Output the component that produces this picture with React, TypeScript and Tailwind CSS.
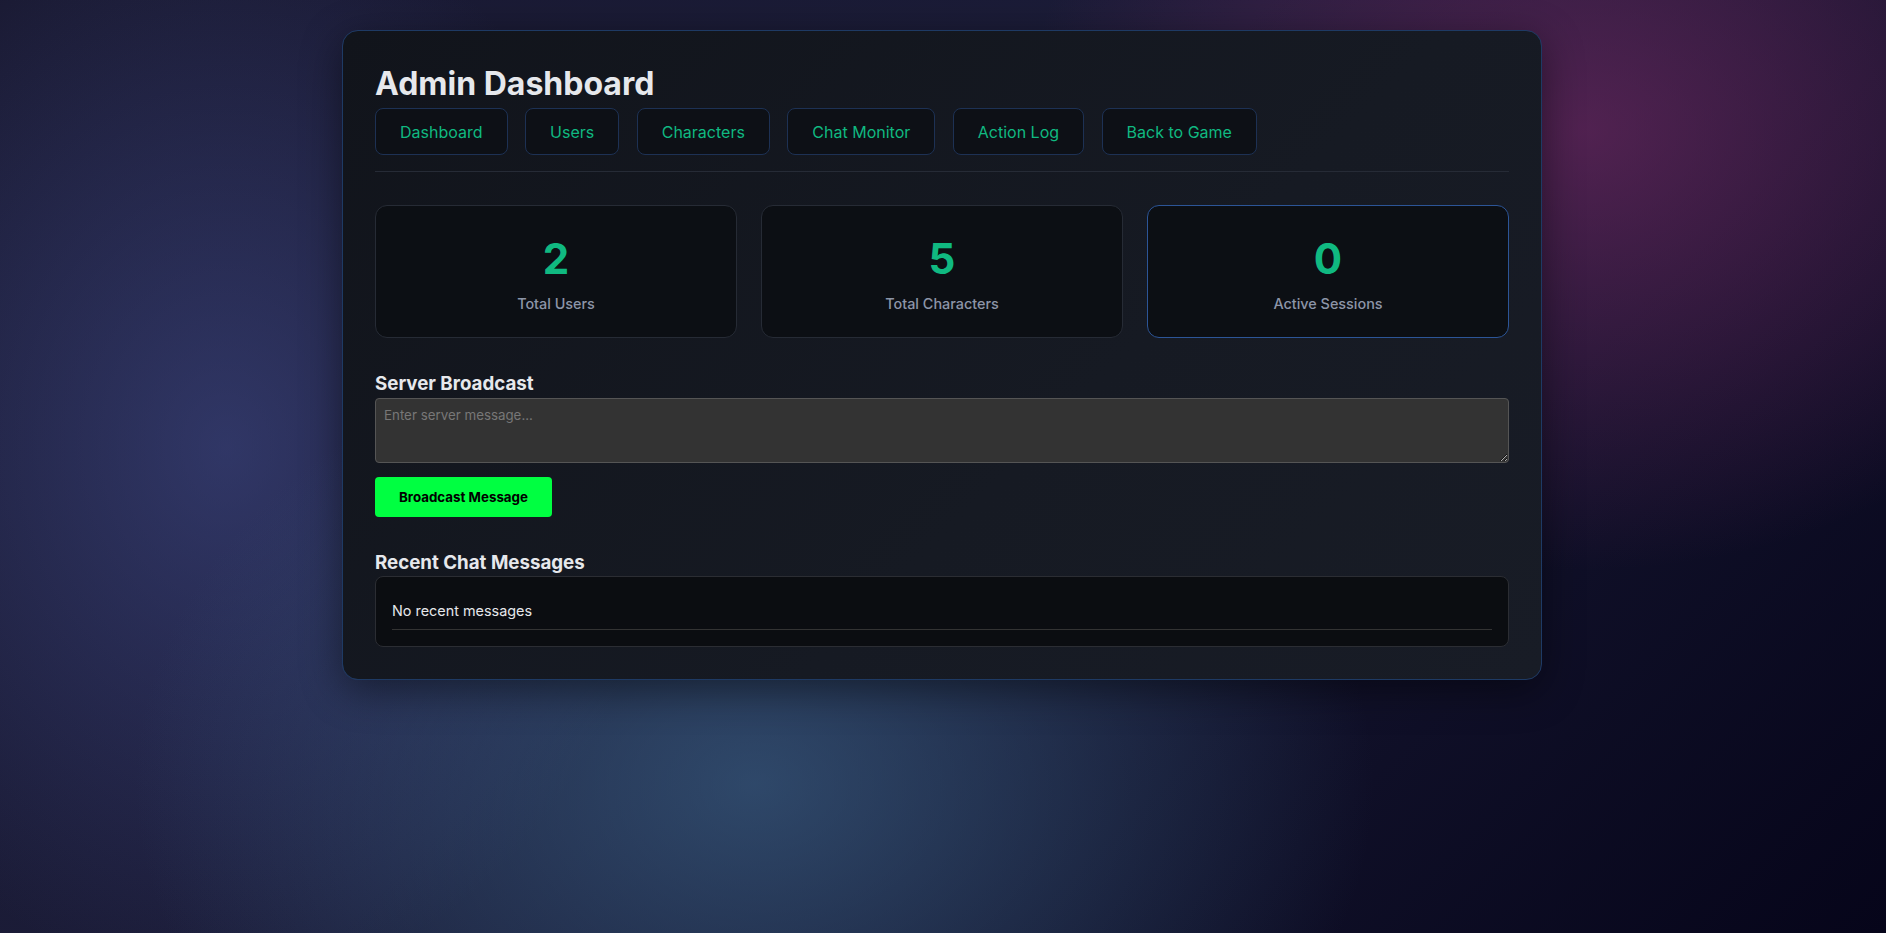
import { useState } from "react";

const tabs = ["Dashboard", "Users", "Characters", "Chat Monitor", "Action Log", "Back to Game"];

const stats = [
  { value: 2, label: "Total Users" },
  { value: 5, label: "Total Characters" },
  { value: 0, label: "Active Sessions", active: true },
];

export default function App() {
  const [message, setMessage] = useState("");
  const recent: string[] = [];

  return (
    <div className="min-h-screen w-full overflow-hidden bg-[#14142a] bg-[image:radial-gradient(ellipse_560px_440px_at_84%_14%,rgba(130,44,108,0.55),transparent),radial-gradient(ellipse_620px_460px_at_40%_84%,rgba(62,104,142,0.6),transparent),radial-gradient(ellipse_440px_540px_at_12%_48%,rgba(70,82,150,0.5),transparent),linear-gradient(135deg,#1a1a33_0%,#1b1c38_45%,#06051a_100%)] pt-[30px] font-['Inter',sans-serif]">
      <div className="relative -left-px mx-auto w-[1200px] rounded-[16px] border border-[#1e3a64] bg-[linear-gradient(135deg,#11141b_0%,#161a23_60%,#181c26_100%)] p-8 shadow-[0_10px_40px_rgba(0,0,0,0.45)]">
        <h1 className="mb-[3px] text-[32px] leading-[42px] font-bold text-[#e6e8ec]">Admin Dashboard</h1>

        {/* nav */}
        <div className="flex gap-[17.5px] border-b border-[#262b36] pb-4">
          {tabs.map((t) => (
            <button
              key={t}
              className="flex h-[47px] items-center rounded-lg border border-[#1d3154] bg-[#0d1016] px-6 text-[16px] font-normal text-[#10b981]"
            >
              {t}
            </button>
          ))}
        </div>

        {/* stats */}
        <div className="mt-[33px] grid grid-cols-3 gap-6">
          {stats.map((s) => (
            <div
              key={s.label}
              className={
                "flex h-[133px] flex-col items-center rounded-xl border bg-[#0c0f14] pt-[29px] " +
                (s.active ? "border-[#2c5597]" : "border-[#262b35]")
              }
            >
              <div className="text-[42px] leading-[48px] font-bold text-[#10b981]">{s.value}</div>
              <div className="mt-[11px] text-[14.4px] leading-5 font-medium text-[#8c95a8]">{s.label}</div>
            </div>
          ))}
        </div>

        {/* broadcast */}
        <h3 className="mt-8 mb-[1px] text-[18.72px] leading-[27px] font-bold text-[#e6e8ec]">Server Broadcast</h3>
        <textarea
          value={message}
          onChange={(e) => setMessage(e.target.value)}
          placeholder="Enter server message..."
          className="block h-[65px] w-full rounded border border-[#555] bg-[#333] p-2 text-[13.33px] leading-[1.2] text-[#ddd] outline-none placeholder:text-[#777]"
        />
        <button className="mt-[14px] rounded bg-[#00ff41] px-6 py-3 text-[13.33px] leading-[1.2] font-bold text-black">
          Broadcast Message
        </button>

        {/* recent chat */}
        <h3 className="mt-8 text-[18.72px] leading-[27px] font-bold text-[#e6e8ec]">Recent Chat Messages</h3>
        <div className="rounded-lg border border-[#2b2d33] bg-[#0b0d11] p-4">
          {recent.length === 0 ? (
            <div className="border-b border-[#333] py-2 text-[14.4px] leading-5 text-[#e5e7eb]">No recent messages</div>
          ) : (
            recent.map((m, i) => (
              <div key={i} className="border-b border-[#333] py-2 text-[14.4px] leading-5 text-[#e5e7eb]">
                {m}
              </div>
            ))
          )}
        </div>
      </div>
    </div>
  );
}
